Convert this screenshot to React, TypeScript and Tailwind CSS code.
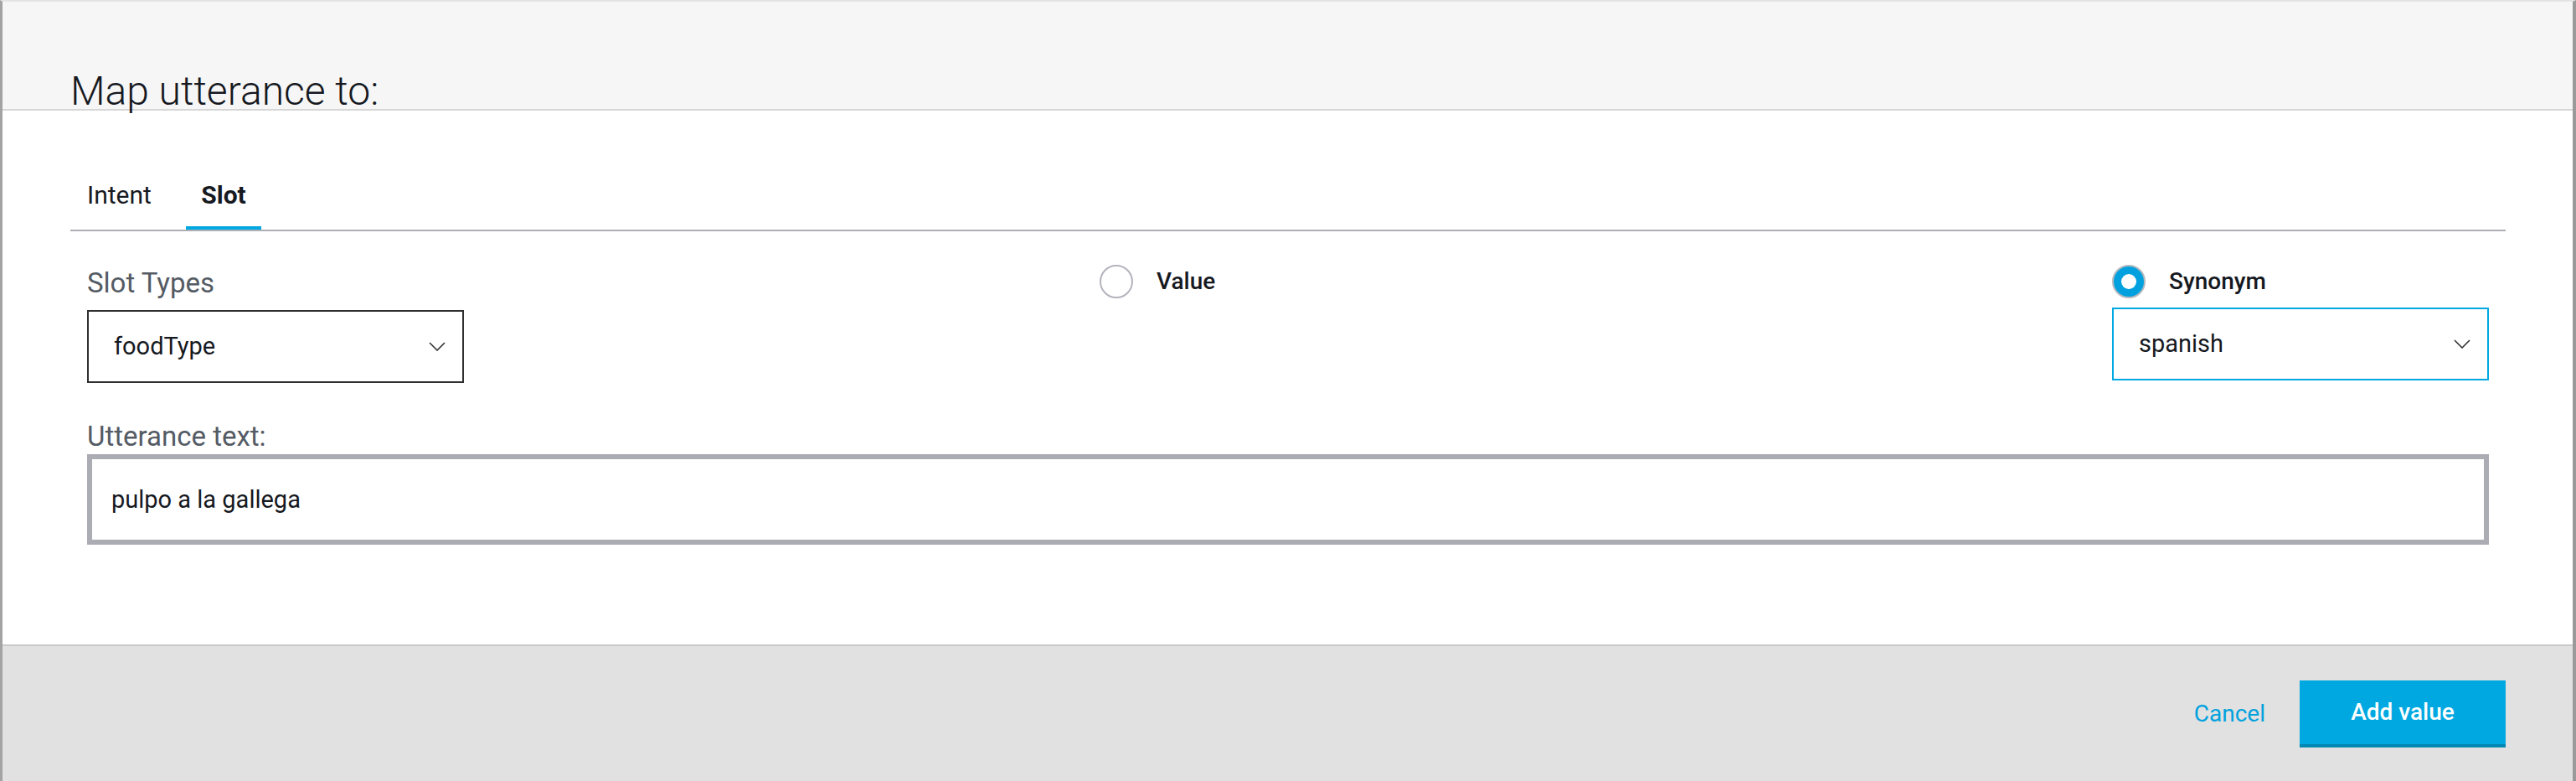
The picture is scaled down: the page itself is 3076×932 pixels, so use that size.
import React from "react";

const font = { fontFamily: "Roboto, 'Liberation Sans', Arial, sans-serif" };

function Chevron() {
  return (
    <svg width="20" height="11" viewBox="0 0 20 11" fill="none">
      <polyline points="1,1 10,10 19,1" stroke="#333333" strokeWidth="1.6" />
    </svg>
  );
}

function Select({ value, active }: { value: string; active?: boolean }) {
  return (
    <div
      className={
        active
          ? "flex items-center justify-between h-[87px] border-2 border-[#00a8e1] bg-white pl-[30px] pr-[20px]"
          : "flex items-center justify-between h-[87px] border-2 border-[#2f2f2f] bg-white pl-[30px] pr-[20px]"
      }
    >
      <span className="text-[29px] leading-none text-[#16191f]">{value}</span>
      <Chevron />
    </div>
  );
}

function Radio({ label, checked }: { label: string; checked?: boolean }) {
  return (
    <div className="flex items-center h-[40px] gap-[28px]">
      {checked ? (
        <div className="w-[40px] h-[40px] rounded-full bg-[#00a1de] border-2 border-[#b4bac0] flex items-center justify-center">
          <div className="w-[18px] h-[18px] rounded-full bg-white" />
        </div>
      ) : (
        <div className="w-[40px] h-[40px] rounded-full border-2 border-[#b3b4bd] bg-white" />
      )}
      <span className="text-[28px] leading-none font-medium text-[#16191f]">{label}</span>
    </div>
  );
}

export default function App() {
  return (
    <div
      style={font}
      className="w-[3076px] h-[932px] flex flex-col border-t-2 border-t-[#e3e3e3] border-l-[3px] border-l-[#a3a3a3] border-r-[4px] border-r-[#9a9a9a] bg-white"
    >
      {/* header */}
      <div className="h-[130px] shrink-0 bg-[#f6f6f6] border-b-2 border-b-[#d6d6d6] pl-[81px] pt-[83px]">
        <h1 className="text-[48px] leading-none font-light text-[#16191f]">Map utterance to:</h1>
      </div>

      {/* body */}
      <div className="flex-1 pl-[81px] pr-[80px] pt-[86px]">
        <div className="flex border-b-2 border-b-[#aeafb6]">
          <div className="w-[138px] pl-[20px] pb-[22px] border-b-4 border-b-transparent text-[30px] leading-[30px] text-[#16191f]">
            Intent
          </div>
          <div className="w-[90px] flex justify-center pb-[22px] border-b-4 border-b-[#00a8e1] text-[30px] leading-[30px] font-bold text-[#16191f]">
            Slot
          </div>
        </div>

        <div className="pl-[20px] pr-[20px]">
          <div className="flex justify-between items-start mt-[40px]">
            <div className="w-[450px]">
              <div className="mt-[2px] text-[33px] leading-[40px] text-[#545b64]">Slot Types</div>
              <div className="mt-[12px]">
                <Select value="foodType" />
              </div>
            </div>
            <div className="w-[450px]">
              <Radio label="Value" />
            </div>
            <div className="w-[450px]">
              <Radio label="Synonym" checked />
              <div className="mt-[11px]">
                <Select value="spanish" active />
              </div>
            </div>
          </div>

          <div className="mt-[44px] text-[33px] leading-[40px] text-[#545b64]">Utterance text:</div>
          <div className="mt-[1px] h-[108px] border-[6px] border-[#abacb4] bg-white flex items-center pl-[23px]">
            <span className="text-[29px] leading-none text-[#16191f]">pulpo a la gallega</span>
          </div>
        </div>
      </div>

      {/* footer */}
      <div className="h-[163px] shrink-0 bg-[#e1e1e1] border-t-2 border-t-[#c9c9c9] flex justify-end items-start pt-[41px] pr-[80px]">
        <div className="flex items-center gap-[41px]">
          <span className="text-[28px] leading-none text-[#00a1de]">Cancel</span>
          <button className="w-[246px] h-[80px] bg-[#00a8e1] border-b-4 border-b-[#0088b5] text-white text-[28px] font-medium leading-none flex items-center justify-center">
            Add value
          </button>
        </div>
      </div>
    </div>
  );
}
